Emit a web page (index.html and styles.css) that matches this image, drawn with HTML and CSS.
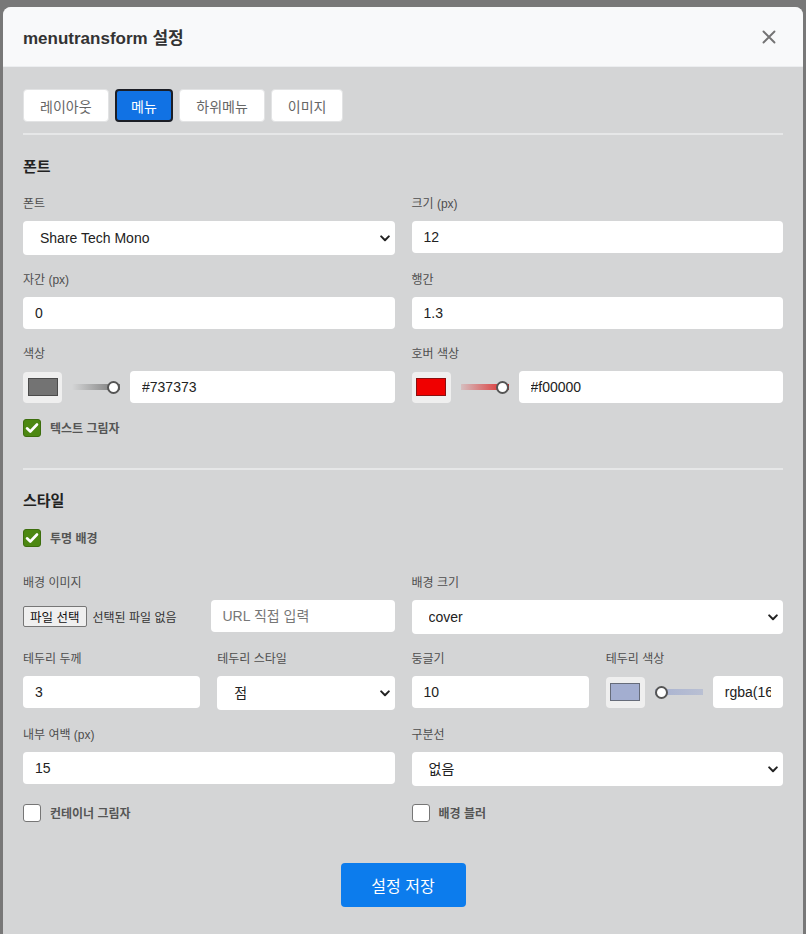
FILE: index.html
```html
<!DOCTYPE html>
<html lang="ko">
<head>
<meta charset="utf-8">
<title>menutransform 설정</title>
<link rel="stylesheet" href="styles.css">
</head>
<body>
<div class="overlay">
  <div class="modal">
    <header class="modal-header">
      <h2 class="modal-title">menutransform 설정</h2>
      <button class="close" aria-label="닫기">
        <svg width="14" height="14" viewBox="0 0 14 14"><path d="M1.5 1.5L12.5 12.5M12.5 1.5L1.5 12.5" stroke="#737373" stroke-width="1.9" stroke-linecap="round"/></svg>
      </button>
    </header>
    <div class="modal-body">
      <nav class="tabs">
        <button class="tab">레이아웃</button>
        <button class="tab active">메뉴</button>
        <button class="tab">하위메뉴</button>
        <button class="tab">이미지</button>
      </nav>

      <section class="section divided">
        <h3 class="section-title">폰트</h3>
        <div class="form-grid">
          <div class="field">
            <label class="label">폰트</label>
            <div class="select">
              <select><option>Share Tech Mono</option></select>
              <svg class="chev" width="10" height="7" viewBox="0 0 10 7"><path d="M1.2 1.4L5 5.2L8.8 1.4" fill="none" stroke="#222" stroke-width="2" stroke-linecap="round" stroke-linejoin="round"/></svg>
            </div>
          </div>
          <div class="field">
            <label class="label">크기 (px)</label>
            <input class="input" type="text" value="12">
          </div>
          <div class="field">
            <label class="label">자간 (px)</label>
            <input class="input" type="text" value="0">
          </div>
          <div class="field">
            <label class="label">행간</label>
            <input class="input" type="text" value="1.3">
          </div>
          <div class="field">
            <label class="label">색상</label>
            <div class="color-row">
              <div class="swatch"><span class="chip chip-gray"></span></div>
              <div class="alpha alpha-gray end"><span class="thumb"></span></div>
              <input class="input" type="text" value="#737373">
            </div>
          </div>
          <div class="field">
            <label class="label">호버 색상</label>
            <div class="color-row">
              <div class="swatch"><span class="chip chip-red"></span></div>
              <div class="alpha alpha-red end"><span class="thumb"></span></div>
              <input class="input" type="text" value="#f00000">
            </div>
          </div>
          <label class="check span-2">
            <span class="box on"><svg width="14" height="12" viewBox="0 0 14 12"><path d="M2 6.3L5.3 9.5L12 2.5" fill="none" stroke="#fff" stroke-width="2.6" stroke-linecap="round" stroke-linejoin="round"/></svg></span>
            텍스트 그림자
          </label>
        </div>
      </section>

      <section class="section second">
        <h3 class="section-title">스타일</h3>
        <div class="form-grid">
          <label class="check span-2 first-check">
            <span class="box on"><svg width="14" height="12" viewBox="0 0 14 12"><path d="M2 6.3L5.3 9.5L12 2.5" fill="none" stroke="#fff" stroke-width="2.6" stroke-linecap="round" stroke-linejoin="round"/></svg></span>
            투명 배경
          </label>
          <div class="field">
            <label class="label">배경 이미지</label>
            <div class="file-row">
              <div class="file">
                <button class="file-btn">파일 선택</button>
                <span class="file-name">선택된 파일 없음</span>
              </div>
              <input class="input url" type="text" placeholder="URL 직접 입력">
            </div>
          </div>
          <div class="field">
            <label class="label">배경 크기</label>
            <div class="select">
              <select><option>cover</option></select>
              <svg class="chev" width="10" height="7" viewBox="0 0 10 7"><path d="M1.2 1.4L5 5.2L8.8 1.4" fill="none" stroke="#222" stroke-width="2" stroke-linecap="round" stroke-linejoin="round"/></svg>
            </div>
          </div>
          <div class="quad">
            <div class="field">
              <label class="label">테두리 두께</label>
              <input class="input" type="text" value="3">
            </div>
            <div class="field">
              <label class="label">테두리 스타일</label>
              <div class="select">
                <select><option>점</option></select>
                <svg class="chev" width="10" height="7" viewBox="0 0 10 7"><path d="M1.2 1.4L5 5.2L8.8 1.4" fill="none" stroke="#222" stroke-width="2" stroke-linecap="round" stroke-linejoin="round"/></svg>
              </div>
            </div>
            <div class="field">
              <label class="label">둥글기</label>
              <input class="input" type="text" value="10">
            </div>
            <div class="field">
              <label class="label">테두리 색상</label>
              <div class="color-row">
                <div class="swatch"><span class="chip chip-blue"></span></div>
                <div class="alpha alpha-blue"><span class="thumb"></span></div>
                <input class="input" type="text" value="rgba(160, 174, 208, 0.3)">
              </div>
            </div>
          </div>
          <div class="field">
            <label class="label">내부 여백 (px)</label>
            <input class="input" type="text" value="15">
          </div>
          <div class="field">
            <label class="label">구분선</label>
            <div class="select">
              <select><option>없음</option></select>
              <svg class="chev" width="10" height="7" viewBox="0 0 10 7"><path d="M1.2 1.4L5 5.2L8.8 1.4" fill="none" stroke="#222" stroke-width="2" stroke-linecap="round" stroke-linejoin="round"/></svg>
            </div>
          </div>
          <label class="check last-check">
            <span class="box"></span>
            컨테이너 그림자
          </label>
          <label class="check last-check">
            <span class="box"></span>
            배경 블러
          </label>
        </div>
      </section>

      <div class="actions">
        <button class="save">설정 저장</button>
      </div>
    </div>
  </div>
</div>
</body>
</html>
```

FILE: styles.css
```css
* {
  box-sizing: border-box;
}

html,
body {
  margin: 0;
  height: 100%;
}

body {
  background: #787878;
  font-family: "Liberation Sans", "Noto Sans CJK KR", sans-serif;
  overflow: hidden;
}

.overlay {
  padding: 7px 3px 0;
}

.modal {
  width: 800px;
  min-height: 960px;
  background: #d4d5d6;
  border-radius: 8px 8px 0 0;
  overflow: hidden;
}

.modal-header {
  height: 60px;
  background: #f8f9fa;
  border-bottom: 1px solid #eceef0;
  display: flex;
  align-items: center;
  justify-content: space-between;
  padding: 0 20px;
}

.modal-title {
  margin: 0;
  font-family: "Liberation Sans", "Noto Sans CJK KR", sans-serif;
  font-size: 17px;
  font-weight: 700;
  color: #333;
}

.close {
  border: 0;
  background: none;
  padding: 0;
  width: 14px;
  height: 14px;
  margin-right: 7px;
  display: flex;
  align-items: center;
  justify-content: center;
}

.modal-body {
  padding: 22px 20px 40px;
}

.tabs {
  display: flex;
  gap: 6px;
  padding-bottom: 11px;
  border-bottom: 2px solid #e6e7e8;
}

.tab {
  height: 33px;
  padding: 0 16px;
  background: #fff;
  border: 1px solid #e2e3e4;
  border-radius: 4px;
  font-family: "Noto Sans CJK KR", sans-serif;
  font-size: 14px;
  color: #666;
}

.tab.active {
  background: #1172e4;
  color: #fff;
  border: 2px solid #1b1e26;
  padding: 0 14.5px;
}

.section {
  padding: 21px 0 31px;
}

.section.divided {
  border-bottom: 2px solid #e6e7e8;
}

.section.second {
  padding: 20px 0 0;
}

.section-title {
  margin: 0 0 19px;
  font-family: "Noto Sans CJK KR", sans-serif;
  font-size: 15px;
  line-height: 20px;
  font-weight: 700;
  color: #222;
}

.form-grid {
  display: grid;
  grid-template-columns: 1fr 1fr;
  gap: 16px 17px;
  align-items: start;
}

.quad {
  grid-column: 1 / -1;
  display: grid;
  grid-template-columns: repeat(4, 1fr);
  gap: 16px 17px;
  align-items: start;
}

.span-2 {
  grid-column: 1 / -1;
}

.label {
  display: block;
  font-family: "Liberation Sans", "Noto Sans CJK KR", sans-serif;
  font-size: 12px;
  line-height: 18px;
  color: #4e4e4e;
  margin-bottom: 8px;
}

.input {
  display: block;
  width: 100%;
  min-width: 0;
  height: 32px;
  border: 0;
  border-radius: 4px;
  background: #fff;
  padding: 0 12px;
  font-family: "Liberation Sans", "Noto Sans CJK KR", sans-serif;
  font-size: 14px;
  color: #222;
  outline: none;
}

.input::placeholder {
  color: #777;
}

.select {
  display: flex;
  align-items: center;
  height: 34px;
  background: #fff;
  border-radius: 4px;
  padding-right: 5px;
}

.select select {
  appearance: none;
  -webkit-appearance: none;
  flex: 1;
  min-width: 0;
  height: 100%;
  border: 0;
  background: transparent;
  padding: 0 0 0 17px;
  font-family: "Liberation Sans", "Noto Sans CJK KR", sans-serif;
  font-size: 14px;
  color: #222;
  outline: none;
}

.chev {
  flex: none;
}

.color-row {
  display: flex;
  align-items: center;
  gap: 10px;
}

.color-row .input {
  flex: 1;
}

.swatch {
  flex: none;
  width: 39px;
  height: 31px;
  background: #efefef;
  border-radius: 4px;
  display: flex;
  align-items: center;
  justify-content: center;
}

.chip {
  width: 30px;
  height: 18px;
  border: 1px solid rgba(0, 0, 0, 0.35);
}

.chip-gray {
  background: #737373;
}

.chip-red {
  background: #f00000;
  border-color: #8a1010;
}

.chip-blue {
  background: #a3aed0;
  border-color: #666c7a;
}

.alpha {
  flex: none;
  width: 48px;
  height: 14px;
  display: flex;
  align-items: center;
  border-radius: 3px;
  background-position: center;
  background-size: 100% 6px;
  background-repeat: no-repeat;
}

.alpha.end {
  justify-content: flex-end;
}

.alpha-gray {
  background-image: linear-gradient(to right, rgba(115, 115, 115, 0), #737373);
}

.alpha-red {
  background-image: linear-gradient(to right, rgba(220, 60, 60, 0.15), #d22);
}

.alpha-blue {
  background-image: linear-gradient(to right, rgba(163, 174, 208, 0.9), rgba(163, 174, 208, 0.55));
}

.thumb {
  width: 13px;
  height: 13px;
  border-radius: 50%;
  background: #fff;
  border: 2px solid #555;
}

.check {
  display: flex;
  align-items: center;
  gap: 9px;
  font-family: "Noto Sans CJK KR", sans-serif;
  font-size: 12px;
  line-height: 18px;
  font-weight: 700;
  color: #555;
}

.first-check {
  margin-bottom: 11px;
}

.last-check {
  margin-top: 2px;
}

.box {
  flex: none;
  width: 18px;
  height: 18px;
  border-radius: 3px;
  border: 1px solid #767676;
  background: #fff;
  display: flex;
  align-items: center;
  justify-content: center;
}

.box.on {
  background: #4d8812;
  border-color: #3c6d0d;
}

.file-row {
  display: flex;
  align-items: center;
  gap: 16px;
}

.file {
  flex: 1;
  display: flex;
  align-items: center;
  gap: 6px;
  min-width: 0;
}

.file-btn {
  height: 21px;
  padding: 0 6px;
  border: 1px solid #767676;
  border-radius: 2px;
  background: #efefef;
  font-family: "Noto Sans CJK KR", sans-serif;
  font-size: 12.5px;
  color: #111;
}

.file-name {
  font-family: "Noto Sans CJK KR", sans-serif;
  font-size: 12px;
  color: #333;
  white-space: nowrap;
}

.input.url {
  flex: none;
  width: 184px;
}

.actions {
  display: flex;
  justify-content: center;
  margin-top: 41px;
}

.save {
  width: 125px;
  height: 44px;
  background: #0c7ced;
  color: #fff;
  border: 0;
  border-radius: 4px;
  font-family: "Noto Sans CJK KR", sans-serif;
  font-size: 16px;
}
```
